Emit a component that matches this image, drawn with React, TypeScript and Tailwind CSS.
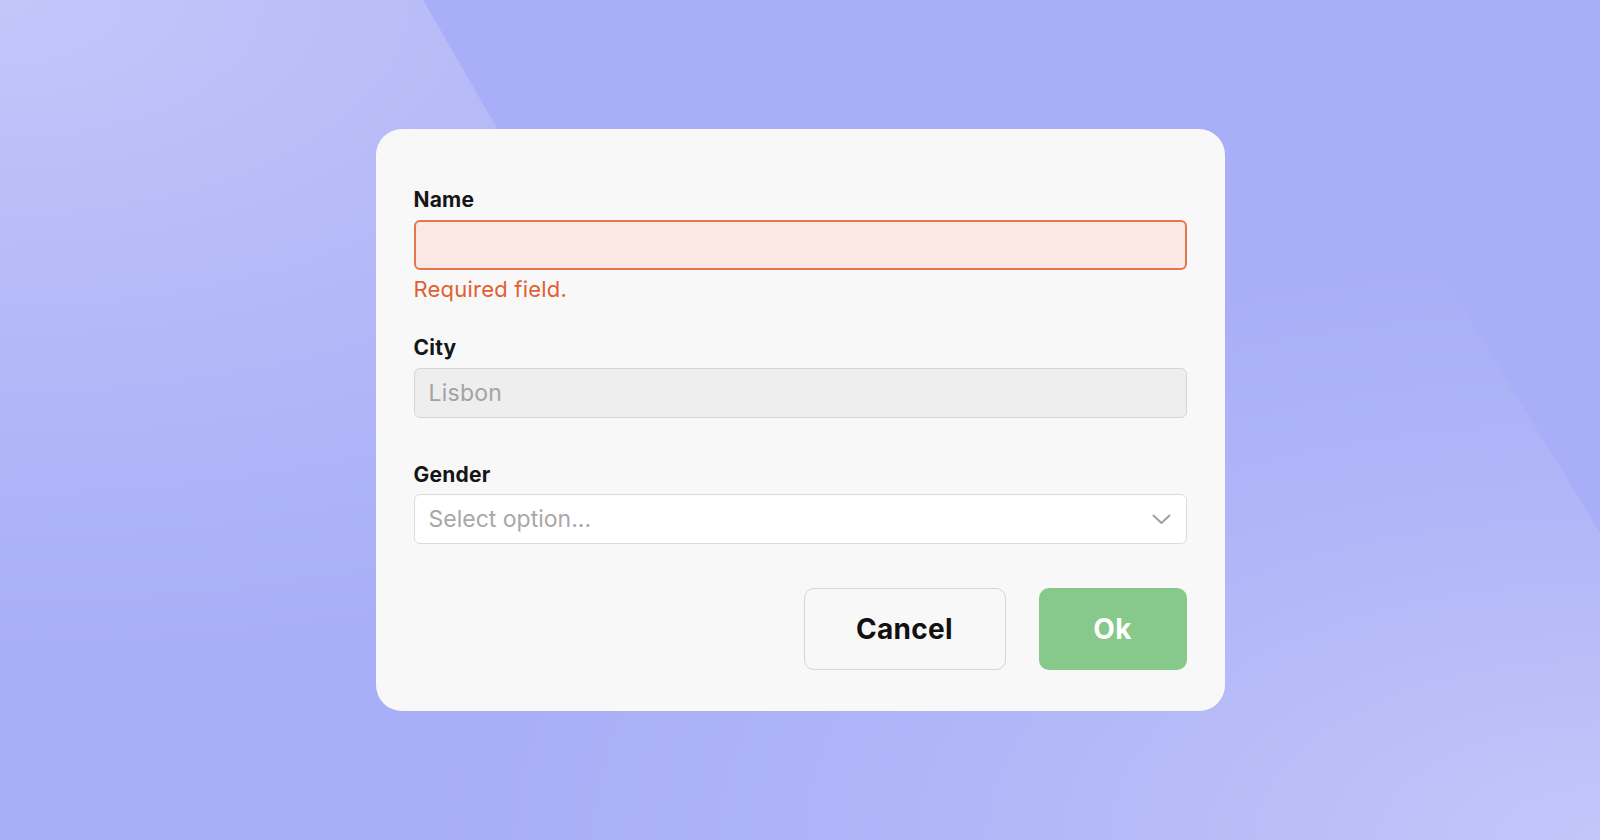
import React from "react";

const font = { fontFamily: "Inter, 'Noto Sans', sans-serif" };

function Label({ children }: { children: React.ReactNode }) {
  return (
    <div className="text-[21px] leading-[28px] font-bold text-[#151515] tracking-[0.01em]">
      {children}
    </div>
  );
}

export default function App() {
  return (
    <div
      className="relative min-h-screen w-full overflow-hidden bg-[#a8aef7] flex items-center justify-center"
      style={font}
    >
      {/* decorative background shapes */}
      <div className="absolute inset-0 bg-[radial-gradient(ellipse_at_top_left,rgba(255,255,255,0.3)_0%,rgba(255,255,255,0.12)_30%,rgba(255,255,255,0)_58%)] [clip-path:polygon(0_0,423px_0,908px_840px,0_840px)]" />
      <div className="absolute inset-0 bg-[radial-gradient(ellipse_at_bottom_right,rgba(255,255,255,0.3)_0%,rgba(255,255,255,0.1)_28%,rgba(255,255,255,0)_52%)] [clip-path:polygon(0_0,1275px_0,1600px_533px,1600px_840px,0_840px)]" />

      <div className="relative w-[849px] rounded-[26px] bg-[#f8f8f8] px-[38px] pt-[57px] pb-[41px] flex flex-col">
        <Label>Name</Label>
        <div className="mt-[6px] h-[50px] rounded-[6px] border-2 border-[#e4774f] bg-[#f9e8e3]" />
        <div className="mt-[5px] text-[22px] leading-[28px] text-[#e0612f] tracking-[0.01em]">
          Required field.
        </div>

        <div className="mt-[31px]">
          <Label>City</Label>
        </div>
        <div className="mt-[6px] h-[50px] rounded-[6px] border border-[#d6d6d6] bg-[#eeeeee] flex items-center pl-[14px] text-[23px] text-[#a3a3a3] tracking-[0.01em]">
          Lisbon
        </div>

        <div className="mt-[43px]">
          <Label>Gender</Label>
        </div>
        <div className="mt-[5px] h-[50px] rounded-[6px] border border-[#dcdcdc] bg-white flex items-center justify-between pl-[14px] pr-[15px] text-[23px] text-[#a8a8a8]">
          <span>Select option...</span>
          <svg width="19" height="11" viewBox="0 0 19 11" fill="none">
            <path d="M1.5 1.5L9.5 9L17.5 1.5" stroke="#a0a0a0" strokeWidth="2" strokeLinecap="round" strokeLinejoin="round" />
          </svg>
        </div>

        <div className="mt-[44px] flex justify-end gap-[33px]">
          <button className="h-[82px] w-[202px] rounded-[10px] border border-[#d6d6d6] bg-[#f8f8f8] text-[28px] font-bold text-[#111111] tracking-[0.01em]">
            Cancel
          </button>
          <button className="h-[82px] w-[148px] rounded-[10px] bg-[#86c98a] text-[28px] font-bold text-white tracking-[0.01em]">
            Ok
          </button>
        </div>
      </div>
    </div>
  );
}
